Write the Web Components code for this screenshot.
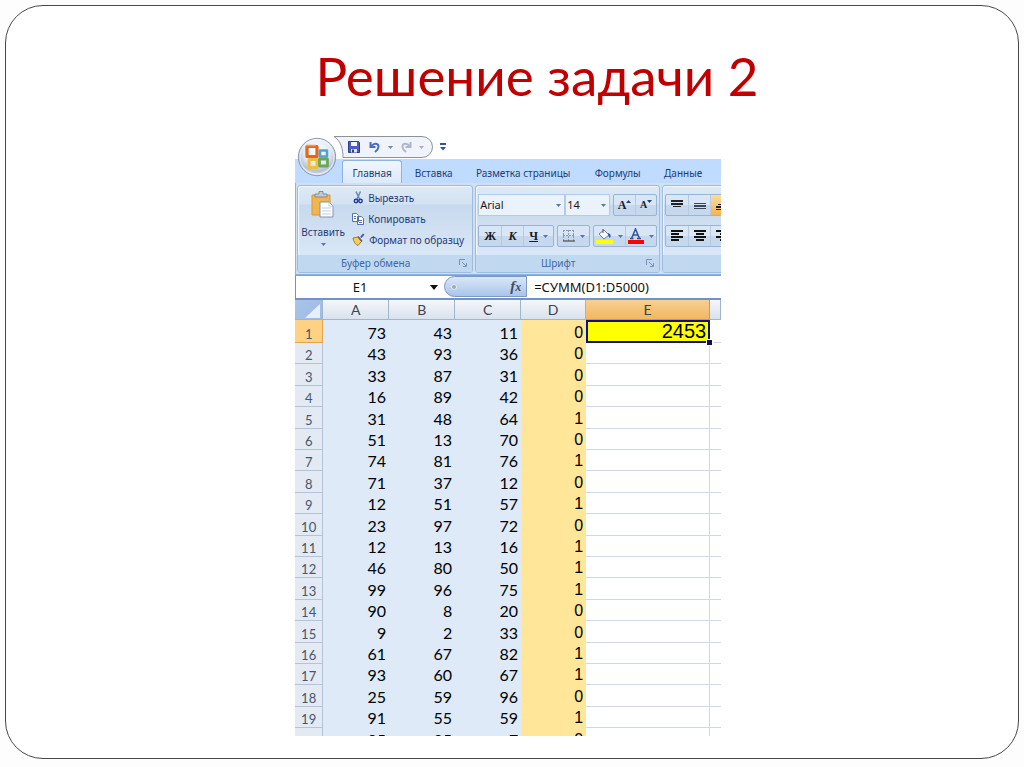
<!DOCTYPE html>
<html lang="ru">
<head>
<meta charset="utf-8">
<meta name="viewport" content="width=device-width, initial-scale=1">
<title>Решение задачи 2</title>
<style>
html,body{margin:0;height:100%;background:#fff}
body{font-family:"Noto Sans","Liberation Sans",sans-serif;overflow:hidden}
</style>
</head>
<body>
<slide-frame>
  <slide-title slot="title">Решение задачи 2</slide-title>
  <excel-window></excel-window>
</slide-frame>

<script>
const define = (name, html, setup) => {
  const t = document.createElement('template');
  t.innerHTML = '<style>*{box-sizing:border-box}button{font:inherit;color:inherit;background:none;border:0;padding:0;margin:0}svg{display:block;flex:none}</style>' + html;
  customElements.define(name, class extends HTMLElement {
    constructor() {
      super();
      const root = this.attachShadow({mode: 'open'});
      root.append(t.content.cloneNode(true));
      if (setup) setup(root, this);
    }
  });
};

define('slide-frame', `
<style>
:host{display:block;height:100vh;padding:5px 5px 8px 5px;box-sizing:border-box;background:#fdfdfd}
main{height:100%;border:1px solid #484848;border-radius:38px;background:#fff;display:flex;flex-direction:column;align-items:center;padding:40px 8px 22px 0}
</style>
<main><slot name="title"></slot><slot></slot></main>`);

define('slide-title', `
<style>
:host{display:block;padding-left:58px}
h1{margin:0;font:400 53px/60px Lato,"Open Sans",sans-serif;color:#c00000;white-space:nowrap}
</style>
<h1><slot></slot></h1>`);

define('excel-window', `
<style>
:host{display:flex;flex-direction:column;flex:1;min-height:0;width:42.4%;min-width:320px;margin-top:29px;overflow:hidden;color:#1e3c78}
</style>
<quick-access></quick-access>
<ribbon-tabs></ribbon-tabs>
<ribbon-panel></ribbon-panel>
<formula-bar></formula-bar>
<sheet-grid></sheet-grid>`);

define('quick-access', `
<style>
:host{display:block;position:relative;height:24px;flex:none;padding-left:38px;z-index:1}
.office{position:absolute;left:2px;top:2px;width:40px;height:40px}
.bar{position:relative;width:100px;height:24px;display:flex;align-items:center;padding-left:15px;gap:7px}
.shape{position:absolute;left:0;top:0}
button{position:relative}
.row{display:flex;align-items:center;gap:7px}
</style>
<button class="office" aria-label="Кнопка Office"><svg width="40" height="40" viewBox="0 0 40 40">
<defs><radialGradient id="g" cx=".5" cy=".35" r=".7"><stop offset="0" stop-color="#fff"/><stop offset=".5" stop-color="#e6ebf3"/><stop offset=".75" stop-color="#b4c2d8"/><stop offset="1" stop-color="#edf2f8"/></radialGradient></defs>
<circle cx="20" cy="20" r="18.700" fill="url(#g)" stroke="#8d9cb5"/><circle cx="20" cy="20" r="17" fill="none" stroke="#fff" opacity=".7"/>
<g fill="none" stroke-linejoin="round"><path d="M10 9.500h10v10H10z" stroke="#e2661f" stroke-width="3.200"/><path d="M23 13.500h7v6h-7z" stroke="#4fa3d2" stroke-width="2.600"/><path d="M12 22.500h8v8h-8z" stroke="#f0bf3a" stroke-width="3"/><path d="M22.500 22h8v7h-8z" stroke="#6aa658" stroke-width="2.800"/></g><path d="M9 8.500h10" stroke="#f29a5a" stroke-width="1.500"/></svg></button>
<div class="row"><div class="bar">
<svg class="shape" width="100" height="24" viewBox="0 0 100 24"><path d="M1 1.500H89a10.500 10.500 0 0 1 0 21H10C10 14 8 6 1 1.500Z" fill="#f0f4fa" stroke="#8f9399"/></svg>
<button aria-label="Сохранить"><svg width="12" height="12" viewBox="0 0 12 12"><path d="M.5.500h10l1 1v10H.500z" fill="#4a5fc0" stroke="#303e92"/><path d="M3 1h6v4H3z" fill="#f2f5ff"/><path d="M3 8h6v3.500H3z" fill="#dfe4f4"/><path d="M4 8.500h2v3H4z" fill="#303e92"/></svg></button>
<button aria-label="Отменить" style="margin-left:2px"><svg width="12" height="12" viewBox="0 0 12 12"><path d="M1.500 1v5h5M2.500 5C5 1.500 10 2 9.500 6c-.2 2.500-1.500 3.500-3.500 5" fill="none" stroke="#4a6dc4" stroke-width="2"/></svg></button>
<button aria-label="История отмены"><svg width="5" height="3"><path d="M0 0h5L2.500 3z" fill="#6e86b6"/></svg></button>
<button aria-label="Вернуть"><svg width="12" height="12" viewBox="0 0 12 12"><path d="M10.500 1v5h-5M9.500 5C7 1.500 2 2 2.500 6c.2 2.500 1.500 3.500 3.500 5" fill="none" stroke="#adb7c6" stroke-width="2"/></svg></button>
<button aria-label="История возврата"><svg width="5" height="3"><path d="M0 0h5L2.500 3z" fill="#a3aebf"/></svg></button>
</div>
<button aria-label="Настройка панели"><svg width="6" height="8"><path d="M0 0h6v2H0zM0 4h6L3 7.500z" fill="#34549a"/></svg></button></div>`);

define('ribbon-tabs', `
<style>
:host{display:block;flex:none;height:24px;background:#bfdbff;font-size:10px}
nav{display:flex;height:24px;padding-left:47px;overflow:hidden}
button{flex:none;height:24px;padding:3px 0 0;line-height:20px;white-space:nowrap}
.on{background:linear-gradient(#eef7ff,#dce9f8);border:1px solid #8db2e3;border-bottom:0;border-radius:3px 3px 0 0;height:23px;margin-top:1px;padding:1px 0 0}
</style>
<nav role="tablist">
<button role="tab" class="on" style="width:60px">Главная</button>
<button role="tab" style="width:63px">Вставка</button>
<button role="tab" style="width:116px">Разметка страницы</button>
<button role="tab" style="width:73px">Формулы</button>
<button role="tab" style="width:58px">Данные</button>
</nav>`);

define('ribbon-group', `
<style>
:host{display:flex;flex-direction:column;flex:none;height:88px;border:1px solid #9fbbdd;border-radius:3px;background:linear-gradient(#dde9f6 0,#d3e2f3 18px,#c7d9ee 19px,#dae8f6 70px);box-shadow:inset 1px 1px #eef5fc;overflow:hidden}
.body{flex:1;min-height:0}
.cap{display:flex;align-items:center;height:17px;background:#c1d8f1;font-size:10px;line-height:16px;color:#4068a6;padding:0 5px 1px 0}
.cap span{flex:1;text-align:center;min-height:16px;padding-right:6px}
</style>
<div class="body"><slot></slot></div>
<div class="cap"><span></span><button aria-label="Параметры группы"><svg width="8" height="8" viewBox="0 0 8 8" fill="none" stroke="#7892b8"><path d="M.5 6V.500H6M3 3l4 4M7.500 4v3.500H4"/></svg></button></div>`,
(r, el) => { r.querySelector('.cap span').textContent = el.getAttribute('caption') || ''; });

define('ribbon-panel', `
<style>
:host{display:block;flex:none;font-size:10px}
.panel{display:flex;gap:2px;height:92px;padding:2px 0 1px 1px;border-left:1px solid #8db2e3;border-bottom:1px solid #8db2e3;background:#cfe0f4;overflow:hidden}
button{white-space:nowrap}
.clip{display:flex;height:100%}
.paste{width:50px;display:flex;flex-direction:column;align-items:center;padding-top:5px;line-height:16px;flex:none}
.paste svg+span{margin-top:6px}
.list{display:flex;flex-direction:column;padding:1px 0 0 4px;flex:1}
.list button{display:flex;align-items:center;gap:4px;height:21px}
.font{padding:8px 2px;display:flex;flex-direction:column;gap:9px}
.line{display:flex;height:22px;gap:3px}
.set{display:flex;border:1px solid #9ab4d4;border-radius:2px;background:linear-gradient(#d9e6f5 0 10px,#c6d8ed 10px);align-items:stretch}
.set button{display:flex;align-items:center;justify-content:center;font:700 12px/20px "Liberation Serif",serif;color:#1a1a1a;gap:5px}
.set button+button{border-left:1px solid #b6cae2}
.pick{position:relative;display:flex}
.pick svg{position:absolute;right:4px;top:10px;pointer-events:none}
select{appearance:none;width:100%;height:22px;border:1px solid #b3cbe8;background:#eaf2fb;border-radius:0;padding:0 1px;font:11px/20px "Noto Sans",sans-serif;color:#1a1a1a}
.hot{background:linear-gradient(#fbdc9d,#f6b44d)}
</style>
<div class="panel">
<ribbon-group caption="Буфер обмена" style="width:176px"><div class="clip">
<button class="paste"><svg width="24" height="27" viewBox="0 0 24 27"><path d="M1 4h18v20H1z" fill="#f0b64c" stroke="#d39a3c"/><path d="M4 3h4V.500h4V3h4v3H4z" fill="#c3cbd6" stroke="#7f8b9c"/><path d="M9 11h9l4 4v11H9z" fill="#fff" stroke="#8294ab"/><path d="M18 11v4h4M11 17h9M11 20h9M11 23h9" fill="none" stroke="#c0cee0"/></svg><span>Вставить</span><svg width="5" height="3" style="margin-top:3px"><path d="M0 0h5L2.500 3z" fill="#5876a8"/></svg></button>
<div class="list">
<button><svg width="12" height="13" viewBox="0 0 12 13" fill="none"><path d="M4 .500 7.500 8M8.500.500 5 8" stroke="#6b87b8" stroke-width="1.500"/><circle cx="4" cy="10" r="1.700" stroke="#213f9a" stroke-width="1.500"/><circle cx="8.500" cy="10" r="1.700" stroke="#213f9a" stroke-width="1.500"/></svg>Вырезать</button>
<button><svg width="12" height="12" viewBox="0 0 12 12" fill="#fff" stroke="#4e70b6"><path d="M.500.500h4l2 2v6h-6zM5.500 3.500h4l2 2v6h-6z"/><path d="M2 3.500h2M2 5.500h2M7 7.500h3M7 9.500h3"/></svg>Копировать</button>
<button><svg width="13" height="13" viewBox="0 0 13 13"><path d="M8 4 11 .500l1.500 1.300L9.500 5z" fill="#4d5c96"/><path d="M1 5 6 4l3.500 4.500L6 12.500Q2 11 1 5z" fill="#f3ce5b" stroke="#a67b2b"/><path d="M6 3.500 10 8.500" stroke="#705c77" stroke-width="1.500"/></svg>Формат по образцу</button>
</div></div></ribbon-group>
<ribbon-group caption="Шрифт" style="width:185px"><div class="font">
<div class="line"><div style="display:flex">
<label class="pick" style="width:87px"><select aria-label="Шрифт"><option>Arial</option></select><svg width="5" height="3"><path d="M0 0h5L2.500 3z" fill="#5876a8"/></svg></label>
<label class="pick" style="width:45px"><select aria-label="Размер"><option>14</option></select><svg width="5" height="3"><path d="M0 0h5L2.500 3z" fill="#5876a8"/></svg></label></div>
<div class="set"><button aria-label="Увеличить размер" style="width:21px;gap:0">A<svg width="5" height="10"><path d="M0 3h5L2.500 0z" fill="#273e78"/></svg></button><button aria-label="Уменьшить размер" style="width:21px;gap:0;font-size:10px">A<svg width="5" height="10"><path d="M0 0h5L2.500 3z" fill="#273e78"/></svg></button></div></div>
<div class="line">
<div class="set"><button style="width:22px">Ж</button><button style="width:22px;font-style:italic">К</button><button style="width:30px"><u>Ч</u><svg width="5" height="3"><path d="M0 0h5L2.500 3z" fill="#5876a8"/></svg></button></div>
<div class="set"><button aria-label="Границы" style="width:31px"><svg width="12" height="12" viewBox="0 0 12 12" fill="none"><path d="M.5 0v11M5.500 0v11M10.500 0v11M0 .500h11M0 5.500h11" stroke="#8b97aa" stroke-dasharray="2 1"/><path d="M0 11h12" stroke="#333"/></svg><svg width="5" height="3"><path d="M0 0h5L2.500 3z" fill="#5876a8"/></svg></button></div>
<div class="set"><button aria-label="Цвет заливки" style="width:31px"><svg width="17" height="16" viewBox="0 0 17 16"><path d="m3 6 5-4 5 5-5 4z" fill="#f5f8fd" stroke="#6b7d9a"/><path d="M7 5V1" stroke="#555"/><path d="M12 5q4 1 2 5-2-1-2-5" fill="#34599f"/><path d="M0 12h17v4H0z" fill="#ff0"/></svg><svg width="5" height="3"><path d="M0 0h5L2.500 3z" fill="#5876a8"/></svg></button><button aria-label="Цвет текста" style="width:31px"><svg width="16" height="16" viewBox="0 0 16 16"><path d="M3.500 10.500 7.500 1l4 9.500M5 7h5M2 10.500h3.500M9 10.500h4" fill="none" stroke="#34549a" stroke-width="1.500"/><path d="M0 12h16v4H0z" fill="red"/></svg><svg width="5" height="3"><path d="M0 0h5L2.500 3z" fill="#5876a8"/></svg></button></div>
</div></div></ribbon-group>
<ribbon-group style="width:176px"><div class="font">
<div class="line"><div class="set"><button aria-label="По верхнему краю" style="width:22px"><svg width="12" height="12"><path d="M0 1h12v2H0zM0 4h12v2H0zM2 7h8v1H2z" fill="#222"/></svg></button><button aria-label="По середине" style="width:22px"><svg width="12" height="12"><path d="M0 4h12v1H0zM0 6h12v2H0zM0 9h12v1H0z" fill="#3b4658"/></svg></button><button class="hot" aria-label="По нижнему краю" style="width:22px"><svg width="12" height="12"><path d="M2 5h8v1H2zM0 7h12v2H0zM0 10h12v1H0z" fill="#222"/></svg></button></div></div>
<div class="line"><div class="set"><button aria-label="По левому краю" style="width:22px"><svg width="12" height="12"><path d="M0 0h12v2H0zM0 3h8v2H0zM0 6h12v2H0zM0 9h8v2H0z" fill="#111"/></svg></button><button aria-label="По центру" style="width:22px"><svg width="12" height="12"><path d="M0 0h12v2H0zM2 3h8v2H2zM0 6h12v2H0zM2 9h8v2H2z" fill="#111"/></svg></button><button aria-label="По правому краю" style="width:22px"><svg width="12" height="12"><path d="M0 0h12v2H0zM4 3h8v2H4zM0 6h12v2H0zM4 9h8v2H4z" fill="#111"/></svg></button></div></div>
</div></ribbon-group>
</div>`);

define('formula-bar', `
<style>
:host{display:flex;flex:none;height:25px;border-top:1px solid #7f9fce;border-bottom:2px solid #6f93c6;border-left:1px solid #6f93c6;background:#fff}
input{border:0;outline:0;padding:0;background:#fff;color:#111;font:13px/20px "Noto Sans",sans-serif;min-width:0;height:21px}
.name{width:128px;text-align:center}
.drop{width:20px;display:flex;align-items:center;justify-content:center}
.fx{width:83px;height:21px;border-radius:11px 0 0 11px;border:1px solid #7d98c2;background:linear-gradient(#d9e7f8,#a9c5ea);display:flex;align-items:center;justify-content:space-between;padding:0 5px 0 6px;font:italic 700 15px/18px "Liberation Serif",serif;color:#444f61}
.dot{width:6px;height:6px;border-radius:3px;background:#9fa9b8;border:1px solid #e8edf4}
small{font-size:12px}
.formula{flex:1;padding-left:7px}
</style>
<input class="name" aria-label="Имя ячейки" value="E1">
<button class="drop" aria-label="Список имён"><svg width="8" height="5"><path d="M0 0h8L4 5z" fill="#111"/></svg></button>
<button class="fx" aria-label="Вставить функцию"><i class="dot"></i><span>f<small>x</small></span></button>
<input class="formula" aria-label="Строка формул" value="=СУММ(D1:D5000)">`);

define('sheet-grid', `
<style>
:host{display:block;flex:1;min-height:0;overflow:hidden;background:#fff}
table{width:100%;table-layout:fixed;border-collapse:separate;border-spacing:0}
th,td{padding:0;overflow:hidden;white-space:nowrap}
thead th{height:20px;font:14px/19px Lato,"Open Sans",sans-serif;color:#3a4453;background:linear-gradient(#f4f7fb,#dbe2ec);border-right:1px solid #9eb6ce;border-bottom:1px solid #9eb6ce}
thead th.corner{background:linear-gradient(135deg,#a9c4e9,#9fbbe5)}
.corner svg{margin:2px 2px 0 auto}
thead th.on{background:linear-gradient(#f8cf94,#f0b860);border-color:#d89446}
tbody tr{height:21px}
tbody tr:nth-child(5n),tbody tr:nth-child(5n+3){height:22px}
tbody tr:first-child{height:23px}
tbody th{font:13px/16px Lato,sans-serif;color:#46566b;background:#e3eaf4;border-right:1px solid #b3c4d9;border-bottom:1px solid #b3c4d9;vertical-align:bottom}
tbody th.on{background:#ffd283;border-color:#e2a54d}
td{text-align:right;font:16px/20px Lato,sans-serif;color:#000;vertical-align:bottom}
.b{background:#deeaf7;padding-right:3px}
.d{background:#ffe699;font:16px/20px "Liberation Sans",sans-serif;padding-right:3px}
.e,.f{border-right:1px solid #d0d7e5;border-bottom:1px solid #d0d7e5}
.f{border-right:0}
.sel{position:relative;overflow:visible;background:#ff0;border:2px solid #101080;font:20px/19px "Liberation Sans",sans-serif;padding-right:2px}
.sel i{position:absolute;right:-4px;bottom:-4px;width:5px;height:5px;background:#10104a;outline:1px solid #fff}
</style>
<table><colgroup><col style="width:28px"><col style="width:66px"><col style="width:66px"><col style="width:66px"><col style="width:65px"><col style="width:124px"><col></colgroup>
<thead><tr><th class="corner" aria-label="Выделить всё"><svg width="15" height="14"><path d="M15 0v14H0z" fill="#e6effa"/></svg></th><th scope="col">A</th><th scope="col">B</th><th scope="col">C</th><th scope="col">D</th><th scope="col" class="on">E</th><th></th></tr></thead>
<tbody></tbody></table>`, root => {
  const rows = [[73,43,11,0],[43,93,36,0],[33,87,31,0],[16,89,42,0],[31,48,64,1],[51,13,70,0],[74,81,76,1],[71,37,12,0],[12,51,57,1],[23,97,72,0],[12,13,16,1],[46,80,50,1],[99,96,75,1],[90,8,20,0],[9,2,33,0],[61,67,82,1],[93,60,67,1],[25,59,96,0],[91,55,59,1],[25,25,7,0]];
  root.querySelector('tbody').innerHTML = rows.map((r, i) =>
    `<tr><th scope="row"${i ? '' : ' class="on"'}>${i < 19 ? i + 1 : ''}</th>` +
    r.map((v, c) => `<td class="${c < 3 ? 'b' : 'd'}">${v}</td>`).join('') +
    (i ? '<td class="e"></td>' : '<td class="sel">2453<i></i></td>') + '<td class="f"></td></tr>').join('');
});
</script>
</body>
</html>
